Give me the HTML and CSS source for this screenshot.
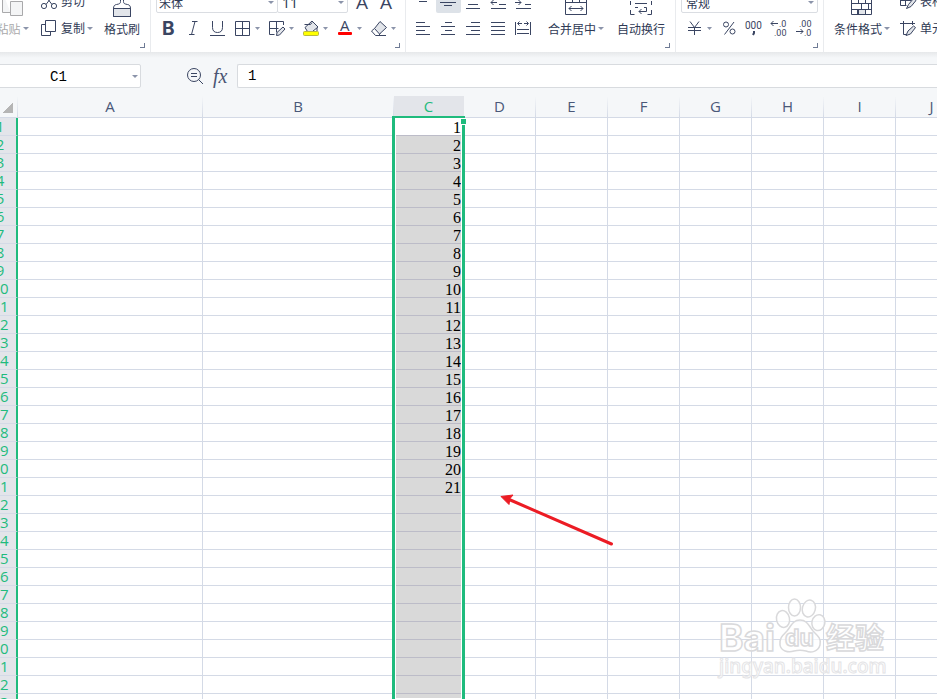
FILE: index.html
```html
<!DOCTYPE html>
<html lang="zh-CN">
<head>
<meta charset="utf-8">
<title>表格</title>
<link rel="stylesheet" href="styles.css">
</head>
<body>
<header class="ribbon" aria-label="开始">
  <section class="group group-clipboard">
    <button class="tall paste" disabled>
      <svg class="tall-icon" width="24" height="28" viewBox="2 -11 24 28"><path class="faint" d="M11.500 12.500H3.500V-8M11.500 15.500h12v-14h-12z"/></svg>
      <span class="label">粘贴<i class="caret"></i></span>
    </button>
    <div class="stack copy-stack">
      <button class="line"><svg width="20" height="24" viewBox="39 -11 20 24"><circle cx="44" cy="6" r="2.600"/><circle cx="54" cy="6" r="2.600"/><path d="M46 4.500L54-6M52 4.500L44-6"/></svg><span>剪切</span></button>
      <button class="line"><svg width="20" height="24" viewBox="39 16 20 24"><path d="M45.500 20.500h10v11h-10zM45.500 24.500h-4v11h9v-4"/></svg><span>复制</span><i class="caret"></i></button>
    </div>
    <button class="tall brush">
      <svg class="tall-icon" width="24" height="28" viewBox="110 -11 24 28"><path class="soft" d="M113.500 8.500h17v8h-17z"/><path d="M120.500-6V1.500c0 2-1 2.500-4 3-2 .3-3 1.500-3 4v8h17v-8c0-2.500-1-3.700-3-4-3-.5-4-1-4-3V-6M113.500 8.500h17"/></svg>
      <span class="label">格式刷</span>
    </button>
    <button class="launcher" aria-label="剪贴板设置"></button>
  </section>

  <section class="group group-font">
    <div class="row combos">
      <label class="combo font-name"><select aria-label="字体"><option>宋体</option></select></label>
      <label class="combo font-size"><select aria-label="字号"><option>11</option></select></label>
      <button class="icon" aria-label="增大字号"><svg width="24" height="24" viewBox="348 -11 24 24"><text x="356" y="9" font-size="19">A</text></svg></button>
      <button class="icon" aria-label="减小字号"><svg width="24" height="24" viewBox="372 -11 24 24"><text x="380" y="9" font-size="19">A</text></svg></button>
    </div>
    <div class="row">
      <button class="icon" aria-label="加粗"><svg width="25" height="24" viewBox="156 16 25 24"><text class="bold" x="162" y="35" font-size="19">B</text></svg></button>
      <button class="icon" aria-label="倾斜"><svg width="24" height="24" viewBox="181 16 24 24"><path d="M192 21.500h5.500M189 34.500h5.500M195 21.500l-3.500 13"/></svg></button>
      <button class="icon" aria-label="下划线"><svg width="26" height="24" viewBox="205 16 26 24"><path d="M212.500 21v6.500c0 3.500 2 5 5 5s5-1.500 5-5V21M210 35.500h15"/></svg></button>
      <button class="icon" aria-label="边框"><svg width="33" height="24" viewBox="231 16 33 24"><path d="M235.500 21.500h14v14h-14zM242.500 21.500v14M235.500 28.500h14"/><path class="tri" d="M255 27h5l-2.500 3z"/></svg></button>
      <button class="icon" aria-label="绘图边框"><svg width="34" height="24" viewBox="264 16 34 24"><path d="M283.500 25v-3.500h-14v13h5M276.500 21.500v11M269.500 28.500h9"/><path class="soft" d="M276.500 35.500l.5-3 6-5.500 2 2-5.500 6z"/><path class="tri" d="M289 27h5l-2.500 3z"/></svg></button>
      <button class="icon" aria-label="填充颜色"><svg width="35" height="24" viewBox="298 16 35 24"><path class="soft" d="M305 27.500l7-6.500 6 6-5.500 4.500h-5z"/><path d="M304.500 24.500h6l1.500-2M317 28v3"/><rect class="yellow" x="303.500" y="31.500" width="15" height="4" rx="1"/><path class="tri" d="M323 27h5l-2.500 3z"/></svg></button>
      <button class="icon" aria-label="字体颜色"><svg width="33" height="24" viewBox="333 16 33 24"><text x="340" y="31" font-size="15">A</text><rect class="red" x="338" y="32" width="14" height="3" rx="1"/><path class="tri" d="M357 27h5l-2.500 3z"/></svg></button>
      <button class="icon" aria-label="清除"><svg width="35" height="24" viewBox="366 16 35 24"><path class="soft" d="M380 21.500l6.500 6-7 6.500-5-5.500z"/><path d="M374.500 28.500l-3 2.500 4 4.500h3l2-2M378 35.500h8"/><path class="tri" d="M391 27h5l-2.500 3z"/></svg></button>
    </div>
    <button class="launcher" aria-label="字体设置"></button>
  </section>

  <section class="group group-align">
    <div class="stack">
      <div class="row">
        <button class="icon" aria-label="顶端对齐"><svg width="25" height="24" viewBox="411 -11 25 24"><path d="M416-3.500h14M419 1.500h8"/></svg></button>
        <button class="icon active" aria-label="垂直居中"><svg width="25" height="24" viewBox="436 -11 25 24"><path d="M444-2.500h8M440 2.500h16M444 5.500h8"/></svg></button>
        <button class="icon" aria-label="底端对齐"><svg width="25" height="24" viewBox="461 -11 25 24"><path d="M470-.500h7M468 4.500h10M466 8.500h14"/></svg></button>
        <button class="icon" aria-label="减少缩进"><svg width="25" height="24" viewBox="486 -11 25 24"><path d="M491 8.500h15M499 4.500h7M499-.500h7M497 2.500h-6M493.500 0l-2.500 2.500 2.500 2.500"/></svg></button>
        <button class="icon" aria-label="增加缩进"><svg width="25" height="24" viewBox="511 -11 25 24"><path d="M516 8.500h15M525 4.500h6M525-.500h6M515 2.500h6M518.500 0l2.500 2.500-2.500 2.500"/></svg></button>
      </div>
      <div class="row">
        <button class="icon" aria-label="左对齐"><svg width="25" height="24" viewBox="411 16 25 24"><path d="M416 22.500h9M416 26.500h14M416 30.500h9M416 34.500h14"/></svg></button>
        <button class="icon" aria-label="水平居中"><svg width="25" height="24" viewBox="436 16 25 24"><path d="M445 22.500h7M441 26.500h14M445 30.500h7M441 34.500h14"/></svg></button>
        <button class="icon" aria-label="右对齐"><svg width="25" height="24" viewBox="461 16 25 24"><path d="M471 22.500h9M466 26.500h14M471 30.500h9M466 34.500h14"/></svg></button>
        <button class="icon" aria-label="两端对齐"><svg width="25" height="24" viewBox="486 16 25 24"><path d="M491 22.500h14M491 26.500h14M491 30.500h14M491 34.500h14"/></svg></button>
        <button class="icon" aria-label="分散对齐"><svg width="25" height="24" viewBox="511 16 25 24"><path d="M515.500 22v13M530.500 22v13M517 29.500h12M517 33.500h12M518 23.500h4M524 23.500h4M519.500 21.500l-2 2 2 2M526.500 21.500l2 2-2 2"/></svg></button>
      </div>
    </div>
    <button class="tall merge">
      <svg class="tall-icon" width="24" height="28" viewBox="564 -11 24 28"><path d="M565.500-6v20.500h21V-6M565.500 2.500h21M572.500 2V-6M579.500 2V-6M569 8.500h14M571.500 6l-2.500 2.500 2.500 2.500M580.500 6l2.500 2.500-2.500 2.500"/></svg>
      <span class="label">合并居中<i class="caret"></i></span>
    </button>
    <button class="tall wrap">
      <svg class="tall-icon" width="24" height="28" viewBox="629 -11 24 28"><path d="M630.500 10v4.500h4M651.500 10v4.500h-4M630.500 5V1M651.500 5V1M635-.500h12M635 3.500h12M635 7.500h3M644 7.500h2.500v4H639M641.500 9l-2.500 2.500 2.500 2.500"/></svg>
      <span class="label">自动换行</span>
    </button>
    <button class="launcher" aria-label="对齐设置"></button>
  </section>

  <section class="group group-number">
    <div class="row">
      <label class="combo number-format"><select aria-label="数字格式"><option>常规</option></select></label>
    </div>
    <div class="row">
      <button class="icon" aria-label="货币"><svg width="36" height="24" viewBox="681 16 36 24"><path d="M690 21.500l4.500 6 4.500-6M694.500 27v8M688 27.500h13M688 30.500h13"/><path class="tri" d="M707 27h5l-2.500 3z"/></svg></button>
      <button class="icon" aria-label="百分比"><svg width="24" height="24" viewBox="717 16 24 24"><circle cx="726" cy="24.500" r="2.500"/><circle cx="732.500" cy="31.500" r="2.500"/><path d="M734 22l-9.500 12.500"/></svg></button>
      <button class="icon" aria-label="千位分隔"><svg width="25" height="24" viewBox="741 16 25 24"><text class="digits" x="745" y="29" font-size="10">000</text><path class="thick" d="M754 31v2l-1 2"/></svg></button>
      <button class="icon" aria-label="增加小数位"><svg width="26" height="24" viewBox="766 16 26 24"><text class="digits" x="779" y="27" font-size="9">.0</text><text class="digits" x="774" y="36" font-size="9">.00</text><path d="M771 23.500h7M773.500 21l-2.500 2.500 2.500 2.500"/></svg></button>
      <button class="icon" aria-label="减少小数位"><svg width="24" height="24" viewBox="792 16 24 24"><text class="digits" x="799" y="27" font-size="9">.00</text><text class="digits" x="804" y="36" font-size="9">.0</text><path d="M796 31.500h7M800.500 29l2.500 2.500-2.500 2.500"/></svg></button>
    </div>
    <button class="launcher" aria-label="数字设置"></button>
  </section>

  <section class="group group-style">
    <button class="tall condition">
      <svg class="tall-icon" width="24" height="28" viewBox="850 -11 24 28"><path class="soft" d="M857.500 9.500h8v5h-8z"/><path d="M851.500-6v20.500h20V-6M851.500 3.500h20M851.500 9.500h20M858.500-6v9M858.500 9.500v5M865.500 9.500v5M861.500 3.500v6M868.500 3.500v6M865.500-6v9M851.500-.500h20"/></svg>
      <span class="label">条件格式<i class="caret"></i></span>
    </button>
    <div class="stack style-stack">
      <button class="line"><svg width="20" height="24" viewBox="899 -11 20 24"><path d="M901.500-6V5.500h6M901.500.500h11M906.500-6V5.500M912.500-6v5"/><path class="soft" d="M907.500 8.500l2-4 5-6 2.500 2-5 6z"/></svg><span>表格样式</span></button>
      <button class="line"><svg width="20" height="24" viewBox="899 16 20 24"><path d="M901 23.500h15M904.500 21v13.500h3M913.500 21v4"/><path class="soft" d="M907 35.500l2-4.500 5.500-5 2 1.500-5 6.500z"/></svg><span>单元格样式</span></button>
    </div>
  </section>
</header>

<div class="formula-bar">
  <label class="name-box"><input aria-label="名称框" value="C1"><i class="caret"></i></label>
  <div class="formula-tools">
    <button class="tool" aria-label="浏览"><svg width="20" height="20" viewBox="185 66 20 20"><circle cx="194" cy="75" r="6.500"/><path d="M198.500 79.500l4.500 4.500M191 73.500h6M191 76.500h6"/></svg></button>
    <button class="tool fx" aria-label="插入函数">fx</button>
  </div>
  <input class="formula" aria-label="编辑栏" value="1">
</div>

<main class="sheet">
  <table class="grid">
    <colgroup><col class="c-head"><col class="c-a"><col class="c-b"><col class="c-c"><col class="c-n" span="7"></colgroup>
    <thead>
      <tr><th class="corner" aria-label="全选"></th><th>A</th><th>B</th><th class="picked">C</th><th>D</th><th>E</th><th>F</th><th>G</th><th>H</th><th>I</th><th>J</th></tr>
    </thead>
    <tbody id="rows"></tbody>
  </table>
  <div class="selection"><span class="handle"></span></div>
  <svg class="pointer" width="116" height="54" viewBox="499 493 116 54"><path class="shaft" d="M508 499l103.500 45"/><path class="tip" d="M501 496.500l12-1.500-3 3.500-1 6z"/></svg>
  <svg class="watermark" width="172" height="86" viewBox="717 596 172 86">
    <text x="719" y="651" font-size="37" class="mark">Bai</text>
    <ellipse cx="794.500" cy="607.500" rx="6" ry="8.500"/>
    <ellipse cx="809" cy="608.500" rx="6.500" ry="8.500" transform="rotate(15 809 608)"/>
    <ellipse cx="783" cy="619" rx="6.500" ry="8.500" transform="rotate(-12 783 619)"/>
    <ellipse cx="818.500" cy="622.500" rx="6.500" ry="8" transform="rotate(12 818 622)"/>
    <path d="M800 620c7 0 9 6 13 11 4 4 9 8 7 14-2 7-9 8-14 6-4-1-8-1-12 0-6 2-13 0-14-6-1-7 3-10 7-14 4-5 6-11 13-11z"/>
    <text x="785" y="646" font-size="23" class="mark">du</text>
    <text x="826" y="649" font-size="29" class="mark">经验</text>
    <text x="719" y="673" font-size="19" class="address">jingyan.baidu.com</text>
  </svg>
</main>
<script src="sheet.js"></script>
</body>
</html>
```
FILE: styles.css
```css
* { box-sizing: border-box; }

body {
  margin: 0;
  height: 100vh;
  display: flex;
  flex-direction: column;
  overflow: hidden;
  background: #f5f7f9;
  color: #2f3a55;
  font-family: "Noto Sans", "Noto Sans CJK SC", sans-serif;
  font-size: 12px;
}

button, select, input { font: inherit; color: inherit; margin: 0; }

button {
  border: 0;
  padding: 0;
  background: none;
  white-space: nowrap;
}

svg { display: block; flex: none; }
svg path, svg circle { fill: none; stroke: #3a4562; stroke-width: 1; }
svg text { fill: #3a4562; font-family: "Open Sans", sans-serif; font-weight: 400; }
svg .soft { fill: #e2e5ea; }
svg .faint { stroke: #a9a9ab; fill: #f4f5f6; }
svg .thick { stroke-width: 2; }
svg .tri { fill: #8b94aa; stroke: none; }
svg .yellow { fill: #ffff00; stroke: #b9b93c; }
svg .red { fill: #ff0000; }
svg .bold { font-family: Inter, sans-serif; font-weight: 700; }
svg .digits { font-family: Roboto, sans-serif; font-weight: 400; }

/* Ribbon */
.ribbon {
  display: flex;
  align-items: flex-end;
  flex: none;
  height: 52px;
  overflow: hidden;
  background: #fff;
}

.group {
  position: relative;
  display: flex;
  flex: none;
  height: 63px;
  padding-bottom: 12px;
  border-right: 1px solid #e9ebee;
}

.group-clipboard { width: 160px; margin-left: -9px; }
.group-font { width: 255px; padding-left: 5px; flex-direction: column; justify-content: space-between; }
.group-align { width: 270px; padding-left: 5px; }
.group-number { width: 148px; padding-left: 5px; flex-direction: column; justify-content: space-between; }
.group-style { padding-left: 7px; border-right: 0; }

.row { display: flex; height: 24px; }
.stack { display: flex; flex-direction: column; justify-content: space-between; }
.line { display: flex; align-items: center; height: 24px; gap: 2px; }
.active { background: #dde2e8; border-radius: 2px; }

.caret {
  display: inline-block;
  flex: none;
  border: 3px solid transparent;
  border-top-color: #8b94aa;
  border-bottom: 0;
}

.tall { display: flex; flex-direction: column; align-items: center; }
.label { display: flex; align-items: center; gap: 2px; height: 24px; }
.paste { width: 43px; color: #a9a9ab; }
.copy-stack { margin-left: 5px; width: 60px; }
.brush { width: 46px; }
.merge { width: 62px; margin-left: 9px; }
.wrap { width: 54px; margin-left: 7px; }
.condition { width: 62px; }
.style-stack { margin-left: 5px; }

.launcher {
  position: absolute;
  right: 5px;
  bottom: 4px;
  width: 5px;
  height: 5px;
  border-right: 1px solid #6f7b95;
  border-bottom: 1px solid #6f7b95;
}

.combo { position: relative; height: 24px; }
.combo::after {
  content: "";
  position: absolute;
  right: 4px;
  top: 12px;
  border: 3px solid transparent;
  border-top-color: #8b94aa;
  border-bottom: 0;
}
.combo select {
  appearance: none;
  width: 100%;
  height: 24px;
  padding: 4px 2px 0;
  border: 1px solid #dadde2;
  border-radius: 2px;
  background: #fff;
}
.font-name { width: 122px; }
.font-size { width: 71px; margin-left: -1px; }
.font-size select { font-size: 14px; padding-left: 4px; padding-top: 2px; }
.number-format { width: 137px; }
.number-format select { padding-left: 4px; }

/* Formula bar */
.formula-bar {
  display: flex;
  flex: none;
  height: 44px;
  padding-top: 12px;
  background: linear-gradient(#e6e8ea, #f5f7f9 6px);
}

.name-box {
  display: flex;
  align-items: center;
  width: 157px;
  height: 24px;
  margin-left: -16px;
  padding-right: 2px;
  border: 1px solid #d8dbdf;
  border-radius: 2px;
  background: #fff;
}
.name-box input {
  flex: 1;
  min-width: 0;
  padding: 2px 0 0;
  border: 0;
  background: none;
  text-align: center;
}
.name-box input, .formula {
  color: #000;
  font-family: "Liberation Mono", monospace;
  font-size: 14px;
}
.formula-tools {
  display: flex;
  align-items: center;
  gap: 8px;
  width: 96px;
  height: 24px;
  padding-left: 44px;
}
.fx { font: italic 20px/20px "Liberation Serif", serif; color: #4a5573; }
.formula {
  flex: 1;
  height: 24px;
  padding: 0 10px;
  border: 1px solid #d8dbdf;
  border-right: 0;
  border-radius: 2px 0 0 2px;
  background: #fff;
}

/* Sheet */
.sheet {
  position: relative;
  flex: 1;
  min-height: 0;
  overflow: hidden;
  background: #fff;
}

.grid {
  table-layout: fixed;
  width: 985px;
  margin-left: -18px;
  border-collapse: separate;
  border-spacing: 0;
}
.c-head { width: 36px; }
.c-a { width: 185px; }
.c-b { width: 191px; }
.c-c { width: 70px; }
.c-n { width: 72px; }

th { padding: 0; font-family: "Open Sans", sans-serif; font-size: 15px; font-weight: 400; }

thead th {
  height: 22px;
  padding-right: 1px;
  line-height: 21px;
  color: #4a5878;
  border-bottom: 1px solid #d4dae6;
  background: linear-gradient(#f5f7f9, #d4dae6) right / 1px 100% no-repeat #f5f7f9;
}
thead .picked { background: #e3e5ea; color: #1fbb7d; }
thead .corner {
  background:
    linear-gradient(#f5f7f9, #d4dae6) right / 1px 100% no-repeat,
    linear-gradient(135deg, transparent 50%, #b5b5b5 50%) 20px 6px / 11px 11px no-repeat #f5f7f9;
}

tbody th {
  height: 18px;
  padding-left: 2px;
  line-height: 17px;
  color: #1fbb7d;
  background: #e3e5ea;
  border-right: 2px solid #1fbb7d;
  border-bottom: 1px solid #d4dae6;
}

td {
  height: 18px;
  padding: 2px 3px 0 0;
  border-right: 1px solid #d4dae6;
  border-bottom: 1px solid #d4dae6;
  color: #000;
  font-family: "Liberation Serif", serif;
  font-size: 16px;
  line-height: 15px;
  text-align: right;
}
td.picked { background: #d9d9d9; border-bottom-color: #bcbcc8; border-right: 0; }
td.current { background: #fff; }

.selection {
  position: absolute;
  left: 392px;
  top: 20px;
  bottom: -3px;
  width: 73px;
  border: 3px solid #1fbb7d;
  border-top-width: 2px;
  box-shadow: inset 0 0 0 1px #fff;
}
.handle {
  position: absolute;
  right: -5px;
  top: 0;
  width: 7px;
  height: 7px;
  border: 1px solid #fff;
  background: #1fbb7d;
}

.pointer { position: absolute; left: 499px; top: 397px; }
.pointer .shaft { stroke: #ec1c24; stroke-width: 3; stroke-linecap: round; }
.pointer .tip { fill: #ec1c24; stroke: #ec1c24; }

.watermark { position: absolute; left: 717px; top: 500px; }
.watermark text, .watermark path, .watermark ellipse {
  fill: #fff;
  fill-opacity: 0.7;
  stroke: #d9d9db;
  stroke-width: 1.5;
}
.watermark .mark { font-family: Inter, "Noto Sans CJK SC", sans-serif; font-weight: 700; }
.watermark .address { font-family: "Noto Sans", sans-serif; font-weight: 500; stroke: #e4e4e6; stroke-width: 1; }
```
FILE: sheet.js
```js
const rowCount = 33;
const columnCount = 10;
const pickedColumn = 2;
const lastFilledRow = 21;
const body = document.getElementById("rows");

for (let r = 1; r <= rowCount; r++) {
  const row = body.insertRow();
  const head = document.createElement("th");
  head.textContent = r;
  row.append(head);
  for (let c = 0; c < columnCount; c++) {
    const cell = row.insertCell();
    if (c !== pickedColumn) continue;
    cell.className = r === 1 ? "picked current" : "picked";
    if (r <= lastFilledRow) cell.textContent = r;
  }
}
```
